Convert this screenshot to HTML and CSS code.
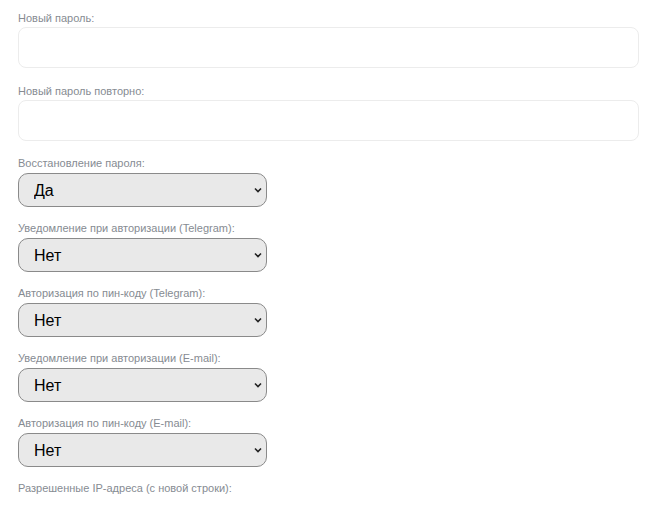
FILE: index.html
```html
<!DOCTYPE html>
<html>
    <head>
        <title>Настройки безопасности</title>
        <link rel="stylesheet" href="styles.css">
    </head>
    <body>
        <form class="settings">
            <div class="field">
                <label>Новый пароль:</label>
                <input type="password" class="text-input">
            </div>
            <div class="field">
                <label>Новый пароль повторно:</label>
                <input type="password" class="text-input">
            </div>
            <div class="field select-field">
                <label>Восстановление пароля:</label>
                <select class="choice">
                    <option>Да</option>
                    <option>Нет</option>
                </select>
            </div>
            <div class="field select-field">
                <label>Уведомление при авторизации (Telegram):</label>
                <select class="choice">
                    <option>Нет</option>
                    <option>Да</option>
                </select>
            </div>
            <div class="field select-field">
                <label>Авторизация по пин-коду (Telegram):</label>
                <select class="choice">
                    <option>Нет</option>
                    <option>Да</option>
                </select>
            </div>
            <div class="field select-field">
                <label>Уведомление при авторизации (E-mail):</label>
                <select class="choice">
                    <option>Нет</option>
                    <option>Да</option>
                </select>
            </div>
            <div class="field select-field">
                <label>Авторизация по пин-коду (E-mail):</label>
                <select class="choice">
                    <option>Нет</option>
                    <option>Да</option>
                </select>
            </div>
            <div class="field">
                <label>Разрешенные IP-адреса (с новой строки):</label>
            </div>
        </form>
    </body>
</html>
```
FILE: styles.css
```css
body {
    margin: 0;
    background: #ffffff;
    font-family: "Liberation Sans", Arial, sans-serif;
}
.settings {
    padding: 11px 13px 0 18px;
}
.field {
    margin-bottom: 16px;
}
.field:nth-child(2) {
    margin-bottom: 15px;
}
.field label {
    display: block;
    font-size: 11px;
    line-height: 14px;
    color: #868b92;
    margin-bottom: 2px;
}
.text-input {
    display: block;
    box-sizing: border-box;
    width: 100%;
    height: 41px;
    border: 1px solid #ececec;
    border-radius: 8px;
    background: #ffffff;
    outline: none;
}
.select-field {
    margin-bottom: 14px;
}
.choice {
    display: block;
    box-sizing: border-box;
    width: 249px;
    height: 34px;
    margin-top: 3px;
    padding: 0 20px 0 15px;
    border: 1px solid #8a8a8a;
    border-radius: 10px;
    -webkit-appearance: none;
    appearance: none;
    /* small chevron drawn on the right */
    background: #e9e9e9 url("data:image/svg+xml,%3Csvg xmlns='http://www.w3.org/2000/svg' width='8' height='6' viewBox='0 0 8 6'%3E%3Cpath d='M1 1.5l3 3 3-3' fill='none' stroke='%23222' stroke-width='1.6'/%3E%3C/svg%3E") no-repeat right 4px center;
    font-family: "Liberation Sans", Arial, sans-serif;
    font-size: 16px;
    color: #000000;
}
```
